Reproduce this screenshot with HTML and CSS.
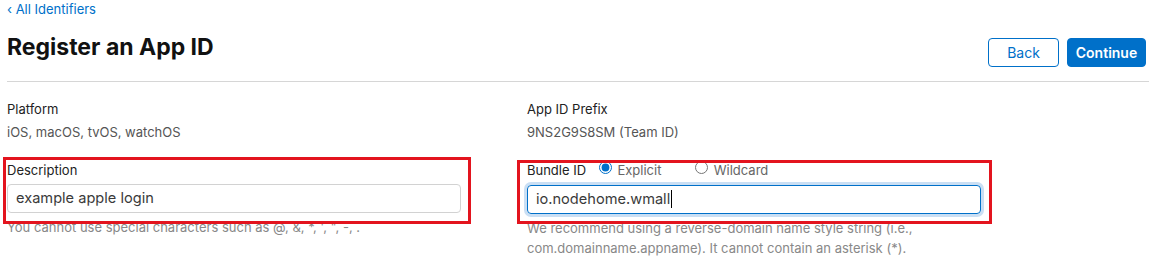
FILE: index.html
```html
<!DOCTYPE html>
<html>
<head>
    <link rel="stylesheet" href="styles.css">
</head>
<body>
    <div class="page">
        <a class="crumb" href="#identifiers">&lsaquo; All Identifiers</a>

        <div class="header">
            <h1>Register an App ID</h1>
            <div class="actions">
                <button type="button" class="btn">Back</button>
                <button type="button" class="btn primary">Continue</button>
            </div>
        </div>

        <div class="grid">
            <div class="field">
                <div class="label">Platform</div>
                <div class="value">iOS, macOS, tvOS, watchOS</div>
            </div>
            <div class="field">
                <div class="label">App ID Prefix</div>
                <div class="value">9NS2G9S8SM (Team ID)</div>
            </div>

            <!-- Description -->
            <div class="field form-row">
                <div class="mark mark-left"></div>
                <div class="label">Description</div>
                <div class="text-box">example apple login</div>
                <div class="help">You cannot use special characters such as @, &amp;, *, ', ", -, .</div>
            </div>

            <!-- Bundle ID -->
            <div class="field form-row">
                <div class="mark mark-right"></div>
                <div class="label">
                    Bundle ID
                    <label class="radio"><input type="radio" name="bundleType" checked> Explicit</label>
                    <label class="radio"><input type="radio" name="bundleType"> Wildcard</label>
                </div>
                <div class="text-box focused"><span class="caret">io.nodehome.wmall</span></div>
                <div class="help">We recommend using a reverse-domain name style string (i.e., com.domainname.appname). It cannot contain an asterisk (*).</div>
            </div>
        </div>
    </div>
</body>
</html>
```

FILE: styles.css
```css
body {
    margin: 0;
    font-family: Inter, "Noto Sans", sans-serif;
    color: #333;
    background-color: #fff;
}

.page {
    padding-left: 7px;
}

.crumb {
    display: block;
    font-size: 13px;
    line-height: 18px;
    color: #0070c9;
    text-decoration: none;
}

.header {
    display: flex;
    justify-content: space-between;
    align-items: flex-start;
    margin-top: 15px;
    padding-right: 3px;
    padding-bottom: 14px;
    border-bottom: 1px solid #d6d6d6;
}

.header h1 {
    margin: 0;
    font-size: 23px;
    line-height: 28px;
    font-weight: 700;
    color: #111;
}

.actions {
    display: flex;
    gap: 8px;
    margin-top: 5px;
}

.btn {
    height: 29px;
    padding: 0 16px;
    font-family: inherit;
    font-size: 14px;
    border: 1px solid #0070c9;
    border-radius: 4px;
    background-color: #fff;
    color: #0070c9;
}

.btn:first-child {
    width: 71px;
}

.btn.primary {
    width: 79px;
    padding: 0;
    background-color: #0070c9;
    color: #fff;
    font-weight: 600;
}

.grid {
    display: grid;
    grid-template-columns: 520px 1fr;
    row-gap: 20px;
    padding-top: 18px;
}

.field {
    position: relative;
}

.label {
    font-size: 13px;
    line-height: 18px;
    font-weight: 400;
    color: #222;
}

.value {
    margin-top: 5px;
    font-size: 13px;
    line-height: 18px;
    color: #555;
}

.radio {
    margin-left: 9px;
    color: #666;
}

.radio + .radio {
    margin-left: 30px;
}

.radio input {
    width: 13px;
    height: 13px;
    margin: 0 2px 0 0;
    vertical-align: 1px;
    accent-color: #0070c9;
}

.text-box {
    box-sizing: border-box;
    width: 454px;
    height: 29px;
    margin-top: 5px;
    padding: 0 8px;
    border: 1px solid #d2d2d2;
    border-radius: 4px;
    font-size: 14.6px;
    line-height: 27px;
    color: #3a3a3a;
}

.text-box.focused {
    margin-top: 6px;
    border-color: #0070c9;
    box-shadow: 0 0 0 3px #cadff4;
}

.caret {
    padding-right: 1px;
    border-right: 1px solid #000;
}

.help {
    width: 454px;
    margin-top: 5px;
    font-size: 13px;
    line-height: 20px;
    color: #888;
}

.form-row .text-box + .help {
    margin-top: 4px;
}

/* red annotation boxes drawn over the fields */
.mark {
    position: absolute;
    box-sizing: border-box;
    border: 3px solid #e3141e;
    z-index: 1;
    pointer-events: none;
}

.mark-left {
    top: -4px;
    left: -4px;
    width: 468px;
    height: 67px;
}

.mark-right {
    top: -1px;
    left: -10px;
    width: 475px;
    height: 64px;
}
```
